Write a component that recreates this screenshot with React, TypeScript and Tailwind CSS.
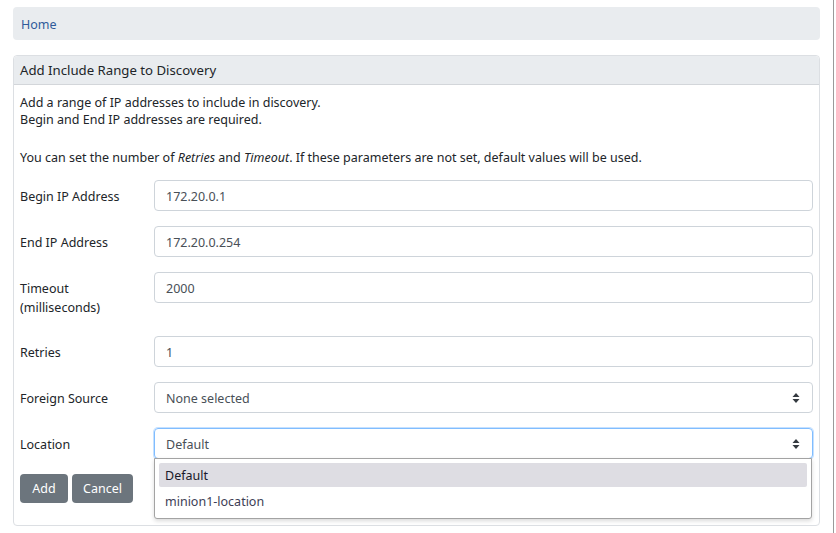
import React from 'react'

function SelectArrows() {
  return (
    <svg width="8" height="12" viewBox="0 0 8 12" className="absolute right-[12px] top-1/2 -translate-y-1/2">
      <path d="M4 1 L7.5 5 L0.5 5 Z" fill="#343a40" />
      <path d="M4 11 L7.5 7 L0.5 7 Z" fill="#343a40" />
    </svg>
  )
}

function Row({ label, children }: { label: React.ReactNode; children: React.ReactNode }) {
  return (
    <div className="flex mb-[15px]">
      <label className="w-[134px] shrink-0 pt-[7px] pb-[4px] leading-[19px] text-[#212529]">{label}</label>
      <div className="flex-1 relative">{children}</div>
    </div>
  )
}

function TextInput({ value }: { value: string }) {
  return (
    <div className="h-[31px] border border-[#ced4da] rounded-[4px] px-[11px] pt-[3px] flex items-center text-[#495057] bg-white">
      {value}
    </div>
  )
}

export default function App() {
  return (
    <div className="w-[836px] h-[533px] relative overflow-hidden bg-white text-[12.5px] font-['Noto_Sans',sans-serif]">
      <div className="pl-[13px] pr-[16px] pt-[7px]">
        <div className="h-[33px] bg-[#e9ecef] rounded-[4px] flex items-center px-[8px] pt-[3px] text-[#2f5b9a]">Home</div>

        <div className="mt-[15px] border border-[#dcdfe3] rounded-[4px] h-[471px]">
          <div className="h-[29px] bg-[#e9ecef] border-b border-[#d3d6da] flex items-center px-[6px] pt-[1px] text-[13.2px] text-[#212529] rounded-t-[4px]">
            Add Include Range to Discovery
          </div>
          <div className="px-[6px] pt-[9px] text-[#212529]">
            <p className="leading-[17px]">
              Add a range of IP addresses to include in discovery.
              <br />
              Begin and End IP addresses are required.
            </p>
            <p className="leading-[17px] mt-[21px]">
              You can set the number of <i>Retries</i> and <i>Timeout</i>. If these parameters are not set, default values will be used.
            </p>

            <div className="mt-[14px]">
              <Row label="Begin IP Address">
                <TextInput value="172.20.0.1" />
              </Row>
              <Row label="End IP Address">
                <TextInput value="172.20.0.254" />
              </Row>
              <Row label={<>Timeout<br />(milliseconds)</>}>
                <TextInput value="2000" />
              </Row>
              <Row label="Retries">
                <TextInput value="1" />
              </Row>
              <Row label="Foreign Source">
                <div className="h-[31px] border border-[#ced4da] rounded-[4px] px-[11px] pt-[3px] flex items-center text-[#495057] relative">
                  None selected
                  <SelectArrows />
                </div>
              </Row>
              <Row label="Location">
                <div className="h-[31px] border border-[#80bdff] rounded-[4px] px-[11px] pt-[3px] flex items-center text-[#495057] relative shadow-[0_0_0_1px_rgba(128,189,255,0.45)]">
                  Default
                  <SelectArrows />
                </div>
                <div className="absolute left-0 right-[1px] top-[30px] z-10 h-[61px] bg-white border border-[#a3a3a3] rounded-b-[3px] shadow-[0_2px_4px_rgba(0,0,0,0.15)] px-[4px] pt-[4px]">
                  <div className="h-[24px] bg-[#dedde3] rounded-[2px] flex items-center px-[6px] pt-[3px] text-[#1a1a2a]">Default</div>
                  <div className="h-[28px] flex items-center px-[6px] pt-[3px] text-[#3d3d55]">minion1-location</div>
                </div>
              </Row>
            </div>

            <div className="flex gap-[4px] mt-[5px]">
              <button className="h-[29px] w-[48px] pt-[1px] bg-[#6c757d] text-white rounded-[4px]">Add</button>
              <button className="h-[29px] w-[61px] pt-[1px] bg-[#6c757d] text-white rounded-[4px]">Cancel</button>
            </div>
          </div>
        </div>
      </div>
      <div className="absolute right-[2px] top-0 bottom-0 w-[1px] bg-[#9a9a9a]" />
    </div>
  )
}
